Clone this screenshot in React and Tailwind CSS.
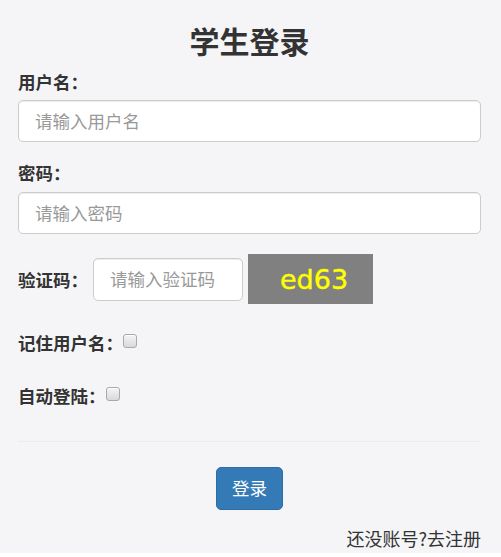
import React from "react";

const cjk = { fontFamily: '"Noto Sans CJK SC", "Noto Sans", sans-serif' };

function Check() {
  return (
    <span className="mt-[4px] inline-block h-[14px] w-[14px] shrink-0 rounded-[3px] border border-[#a9a9a9] bg-gradient-to-b from-[#f4f4f4] to-[#d9d9d9] shadow-[inset_0_1px_0_#fff]" />
  );
}

export default function App() {
  return (
    <div style={cjk} className="bg-[#f5f5f7] text-[#333] pl-[18px] pr-[20px] min-h-[553px]">
      <h2 className="pt-[23px] text-center text-[30px] leading-[34px] font-bold">学生登录</h2>

      <div className="mt-[12px] text-[17.5px] leading-[25px] font-bold">用户名：</div>
      <div className="mt-[6px] h-[42px] rounded-[5px] border border-[#ccc] bg-white pl-[16px] flex items-center text-[17.5px] text-[#999] shadow-[inset_0_1px_1px_rgba(0,0,0,0.075)]">请输入用户名</div>

      <div className="mt-[18px] text-[17.5px] leading-[25px] font-bold">密码：</div>
      <div className="mt-[7px] h-[42px] rounded-[5px] border border-[#ccc] bg-white pl-[16px] flex items-center text-[17.5px] text-[#999] shadow-[inset_0_1px_1px_rgba(0,0,0,0.075)]">请输入密码</div>

      <div className="mt-[20px] flex items-center">
        <div className="text-[17.5px] leading-[25px] font-bold w-[75px] shrink-0">验证码：</div>
        <div className="h-[43px] w-[150px] shrink-0 rounded-[5px] border border-[#ccc] bg-white pl-[16px] flex items-center text-[17.5px] text-[#999] shadow-[inset_0_1px_1px_rgba(0,0,0,0.075)]">请输入验证码</div>
        <div className="ml-[5px] h-[50px] w-[125px] shrink-0 bg-[#808080] flex items-center pl-[32px]">
          <span style={{ fontFamily: '"DejaVu Sans", Verdana, sans-serif' }} className="text-[27px] text-[#ffff00] leading-none mt-[1px] [-webkit-text-stroke:0.4px_#ffff00]">ed63</span>
        </div>
      </div>

      <div className="mt-[26px] flex items-start">
        <span className="text-[17.5px] leading-[25px] font-bold">记住用户名：</span>
        <Check />
      </div>

      <div className="mt-[28px] flex items-start">
        <span className="text-[17.5px] leading-[25px] font-bold">自动登陆：</span>
        <Check />
      </div>

      <div className="mt-[33px] border-t border-[#ebebed]" />

      <div className="mt-[25px] flex justify-center">
        <button className="h-[43px] w-[67px] rounded-[5px] bg-[#337ab7] text-white text-[17.5px] border border-[#2e6da4]" style={cjk}>登录</button>
      </div>

      <div className="mt-[16px] text-right text-[18px] leading-[25px] text-[#333]">还没账号?去注册</div>
    </div>
  );
}
